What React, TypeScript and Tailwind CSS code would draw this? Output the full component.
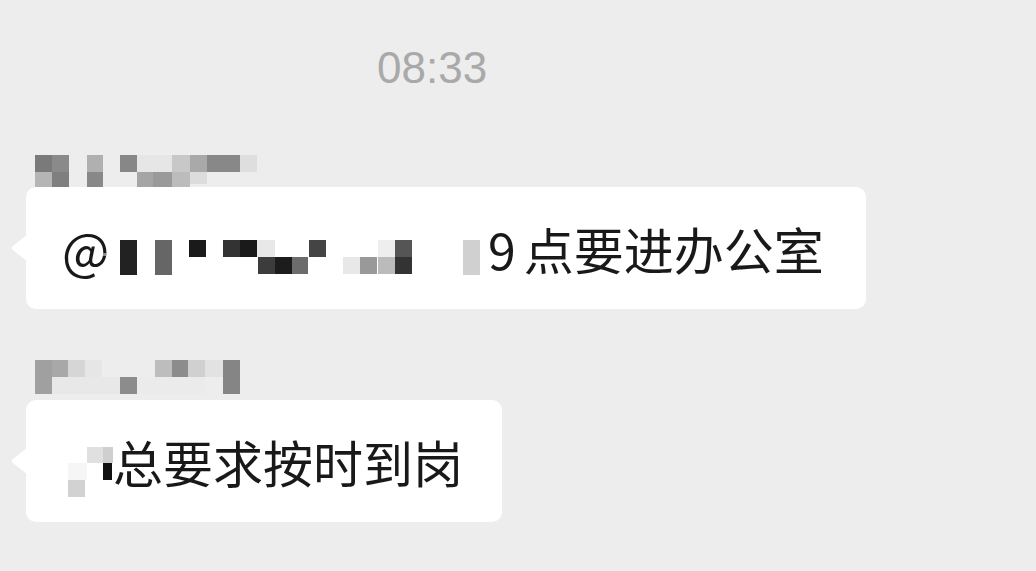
import React from "react";

type Cell = [number, number, number, number, string];

function Mosaic({ w, h, cells }: { w: number; h: number; cells: Cell[] }) {
  return (
    <svg width={w} height={h} viewBox={`0 0 ${w} ${h}`} className="block shrink-0">
      {cells.map((c, i) => (
        <rect key={i} x={c[0]} y={c[1]} width={c[2]} height={c[3]} fill={c[4]} />
      ))}
    </svg>
  );
}

function Tail() {
  return (
    <svg width="18" height="28" viewBox="0 0 18 28" className="absolute left-[-16px] top-1/2 -translate-y-1/2">
      <path d="M18 0 L3 12 Q0 14 3 16 L18 28 Z" fill="#ffffff" />
    </svg>
  );
}

const name1: Cell[] = [
  [0, 0, 17, 17, "#7a7a7a"],
  [17, 0, 17, 17, "#8a8a8a"],
  [52, 0, 16, 17, "#b0b0b0"],
  [85, 0, 17, 17, "#878787"],
  [102, 0, 35, 17, "#e6e6e6"],
  [137, 0, 18, 17, "#c8c8c8"],
  [155, 0, 17, 17, "#a9a9a9"],
  [172, 0, 33, 17, "#888888"],
  [205, 0, 17, 17, "#dedede"],
  [0, 17, 17, 15, "#b5b5b5"],
  [17, 17, 17, 15, "#7f7f7f"],
  [52, 17, 16, 15, "#888888"],
  [102, 17, 16, 15, "#a5a5a5"],
  [118, 17, 19, 15, "#9a9a9a"],
  [137, 17, 18, 15, "#bcbcbc"],
  [155, 17, 17, 12, "#dcdcdc"],
];

const name2: Cell[] = [
  [0, 0, 17, 17, "#a0a0a0"],
  [17, 0, 16, 17, "#a8a8a8"],
  [33, 0, 17, 17, "#d6d6d6"],
  [50, 0, 17, 17, "#e6e6e6"],
  [120, 0, 17, 17, "#bdbdbd"],
  [137, 0, 16, 17, "#8c8c8c"],
  [153, 0, 17, 17, "#d0d0d0"],
  [170, 0, 18, 17, "#e2e2e2"],
  [188, 0, 17, 34, "#858585"],
  [0, 17, 17, 17, "#a0a0a0"],
  [17, 17, 68, 17, "#e8e8e8"],
  [85, 17, 17, 17, "#8c8c8c"],
  [102, 17, 68, 17, "#ebebeb"],
];

const msg1: Cell[] = [
  [1, 13, 3, 3, "#8a8a8a"],
  [18, 0, 17, 35, "#222222"],
  [53, 0, 17, 35, "#666666"],
  [87, 0, 17, 17, "#1a1a1a"],
  [121, 0, 17, 17, "#333333"],
  [138, 0, 17, 17, "#1a1a1a"],
  [155, 0, 18, 17, "#e8e8e8"],
  [207, 0, 17, 17, "#444444"],
  [276, 0, 17, 17, "#eeeeee"],
  [293, 0, 17, 17, "#555555"],
  [361, 0, 17, 35, "#d0d0d0"],
  [156, 17, 17, 17, "#3c3c3c"],
  [173, 17, 17, 17, "#1c1c1c"],
  [190, 17, 16, 17, "#6c6c6c"],
  [241, 17, 17, 17, "#e8e8e8"],
  [258, 17, 17, 17, "#999999"],
  [276, 17, 17, 17, "#bbbbbb"],
  [293, 17, 17, 17, "#333333"],
];

const msg2: Cell[] = [
  [19, 0, 16, 16, "#e0e0e0"],
  [35, 0, 10, 16, "#cfcfcf"],
  [0, 16, 19, 17, "#f6f6f6"],
  [35, 16, 9, 17, "#111111"],
  [0, 33, 17, 17, "#d2d2d2"],
];

export default function App() {
  const cjk = { fontFamily: '"Noto Sans CJK SC", "Noto Sans", sans-serif' };
  return (
    <div className="w-[1036px] h-[571px] bg-[#ededed] overflow-hidden flex flex-col" style={cjk}>
      <div
        className="pt-[46px] pl-[377px] text-[44px] leading-none text-[#a9a9a9]"
        style={{ fontFamily: '"Liberation Sans", Arial, sans-serif' }}
      >
        08:33
      </div>

      <div className="mt-[65px] ml-[35px]">
        <Mosaic w={225} h={32} cells={name1} />
      </div>

      <div className="ml-[26px] w-[840px] h-[122px] bg-white rounded-[10px] relative flex items-center pl-[36px] text-[50px] leading-none text-[#191919]">
        <Tail />
        <span className="inline-block w-[40px]">@</span>
        <div className="mt-[19px]">
          <Mosaic w={386} h={35} cells={msg1} />
        </div>
        <span>9</span>
        <span className="ml-[8px]">点要进办公室</span>
      </div>

      <div className="mt-[51px] ml-[35px]">
        <Mosaic w={205} h={40} cells={name2} />
      </div>

      <div className="ml-[26px] w-[476px] h-[122px] bg-white rounded-[10px] relative flex items-center pl-[42px] text-[50px] leading-none text-[#191919]">
        <Tail />
        <div className="mt-[22px]">
          <Mosaic w={45} h={50} cells={msg2} />
        </div>
        <span>总要求按时到岗</span>
      </div>
    </div>
  );
}
